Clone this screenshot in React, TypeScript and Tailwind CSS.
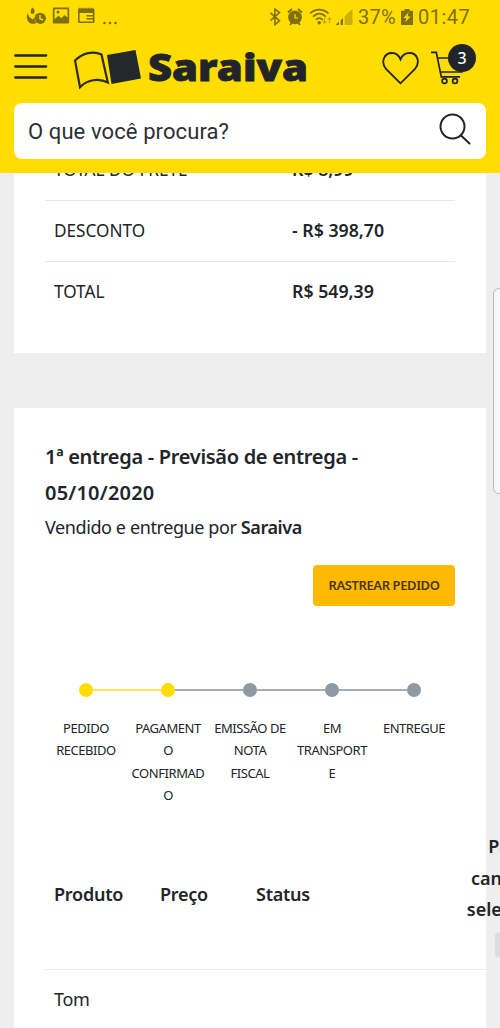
import { clsx } from 'clsx';

const summary = [
  { label: 'TOTAL DO FRETE', value: 'R$ 8,99' },
  { label: 'DESCONTO', value: '- R$ 398,70' },
  { label: 'TOTAL', value: 'R$ 549,39' },
];

const steps = [
  { label: 'PEDIDO RECEBIDO', done: true },
  { label: 'PAGAMENTO CONFIRMADO', done: true },
  { label: 'EMISSÃO DE NOTA FISCAL', done: false },
  { label: 'EM TRANSPORTE', done: false },
  { label: 'ENTREGUE', done: false },
];

const StatusBar = () => (
  <div className="flex h-[34px] items-center justify-between pl-[26px] pr-[29px] font-[Roboto,sans-serif] text-[20px] text-[#80700c]">
    <svg width="94" height="20" viewBox="0 0 94 20" fill="currentColor">
      <path d="M6.500 .5c2.500 2 2.800 4 1.200 6.200H5.300C4 4.600 4.600 2.500 6.500 .5z" />
      <path d="M1.500 6.500c-2 5 .5 10.300 5.500 10.300 1.500 0 2.500-.4 3.500-1-2.500-2-2.500-6 .3-8.300l-.8-1-1 3.500-2.500 2.500-3-2.500z" />
      <circle cx="14.300" cy="11.300" r="5.600" />
      <path d="M14 8v3.800l3 1.200" fill="none" stroke="#ffdd00" strokeWidth="1.400" />
      <path fillRule="evenodd" d="M28 .5h14a1.200 1.200 0 0 1 1.200 1.200v13.600a1.200 1.200 0 0 1-1.200 1.200H28a1.200 1.200 0 0 1-1.200-1.200V1.700A1.200 1.200 0 0 1 28 .5zM28.500 2.200v10l4-3.500 3 2.500 3-3.200 3 2.500V2.200z" />
      <circle cx="32" cy="5" r="1.500" />
      <path fillRule="evenodd" d="M53 1.500h14.500a1 1 0 0 1 1 1V15a1 1 0 0 1-1 1H53a1 1 0 0 1-1-1V2.500a1 1 0 0 1 1-1zM53.600 6v8.500h13.200V6z" />
      <path d="M53 .8h1.500v1H53zM56 .8h1.500v1H56zM59 .8h1.500v1H59zM62 .8h1.500v1H62zM65 .8h1.500v1H65zM60.500 8h6.500v1.500h-6.500zM60.500 11h6.500v1.500h-6.500z" />
      <circle cx="78.500" cy="16" r="1.300" />
      <circle cx="84" cy="16" r="1.300" />
      <circle cx="89.500" cy="16" r="1.300" />
    </svg>
    <div className="flex items-center">
      <svg width="86" height="18" viewBox="0 0 86 18" fill="currentColor">
        <path d="M1.500 4.800l9 8-4.600 3.800V1l4.600 3.600-9 8" fill="none" stroke="currentColor" strokeWidth="1.600" />
        <circle cx="26" cy="9.300" r="6.900" />
        <path d="M19 4.500l4-3.500M33 4.500L29 1M21 17l2-2.500M31 17l-2-2.500" stroke="currentColor" strokeWidth="1.900" />
        <path d="M26 6v4h3" fill="none" stroke="#ffdd00" strokeWidth="1.200" />
        <g fill="none" stroke="currentColor" strokeWidth="1.700">
          <path d="M41 5.500c5.500-5.300 13-5.300 18.500 0" />
          <path d="M44 8.700c4-3.800 8.800-3.800 12.800 0" />
          <path d="M47 11.800c2-2 4.500-2 6.700 0" />
        </g>
        <circle cx="50.200" cy="14.700" r="1.700" />
        <path d="M55.500 10v5m-1.800-1.800l1.800 2 1.800-2M60.500 15v-5m-1.800 1.800l1.800-2 1.800 2" fill="none" stroke="currentColor" strokeOpacity=".45" strokeWidth="1.100" />
        <path d="M70 13.500V17h-3.500zM74 10v7h-2.300v-4.800z" />
        <path d="M75.700 8.500l2.800-3L83.500 1v16h-7.800z" opacity=".4" />
      </svg>
      <span className="ml-[3px] w-[40px] whitespace-nowrap tracking-[0.3px]">37%</span>
      <svg className="ml-[3px]" width="12" height="18" viewBox="0 0 12 18">
        <path d="M3.500 1h5v1.700H12V17H0V2.700h3.500z" fill="currentColor" />
        <path d="M7.800 4L2.500 10H5.300L4 14.500 9.500 8.500H6.500z" fill="#ffdd00" />
      </svg>
      <span className="ml-[5px] w-[53px] whitespace-nowrap tracking-[0.5px]">01:47</span>
    </div>
  </div>
);

const Header = () => (
  <header className="h-[173px] shrink-0 bg-[#ffdd00]">
    <StatusBar />
    <div className="flex h-[69px] items-start pl-[14px] pr-[23px]">
      <svg className="mt-[18px]" width="34" height="30" viewBox="0 0 34 30" stroke="#212529" strokeWidth="2.300" strokeLinecap="round">
        <path d="M1.200 3.500h31M1.200 14.500h31M1.200 25.500h31" />
      </svg>
      <svg className="ml-[24px] mt-[12px] overflow-visible" width="238" height="46" viewBox="0 0 238 46">
        <path d="M3 14.500C11 7 21 4.500 29.500 8.500L35.800 36.500C26.500 31.500 15 34 8 41.200z" fill="none" stroke="#2d2c1b" strokeWidth="2.200" />
        <path d="M35 9L63.500 4 69 32.500 39.500 38z" fill="#23282d" />
        <text
          x="76"
          y="35"
          fontSize="37"
          fontWeight="900"
          fill="#212529"
          stroke="#212529"
          strokeWidth="0.800"
          fontFamily="Noto Sans, sans-serif"
          textLength="160"
          lengthAdjust="spacingAndGlyphs"
        >
          Saraiva
        </text>
      </svg>
      <svg className="ml-[72px] mt-[17px]" width="38" height="34" viewBox="0 0 38 34" fill="none" stroke="#212529" strokeWidth="1.800">
        <path d="M18.500 32.300L4 18C-1.500 11 2 2 10 2c4 0 7 2.700 8.500 6.300C20 4.700 23.500 2 27.500 2c8 0 11 9 5.500 16z" />
      </svg>
      <div className="relative ml-[11px] mt-[10px] h-[42px] w-[46px]">
        <svg className="mt-[6px]" width="34" height="36" viewBox="0 0 34 36" fill="none" stroke="#212529" strokeWidth="1.700">
          <path d="M0 2.300h5.300l5 24.500H29M6.500 8H31v14H9.500" />
          <circle cx="13.500" cy="31" r="2.400" />
          <circle cx="24" cy="31" r="2.400" />
        </svg>
        <span className="absolute left-[17px] top-0 flex h-[28px] w-[28px] items-center justify-center rounded-full bg-[#212529] font-['Noto_Sans',sans-serif] text-[16px] font-medium leading-none text-white">
          3
        </span>
      </div>
    </div>
    <div className="mx-[14px] flex h-[56px] items-center justify-between rounded-lg bg-white pl-[14px] pr-[15px]">
      <span className="font-[Roboto,sans-serif] text-[22px] tracking-[0.1px] text-[#2c3034]">O que você procura?</span>
      <svg className="-mt-[5px]" width="32" height="32" viewBox="0 0 32 32" fill="none" stroke="#212529" strokeWidth="2" strokeLinecap="round">
        <circle cx="13.500" cy="13.500" r="12" />
        <path d="M22 22.500l8.500 8" />
      </svg>
    </div>
  </header>
);

const Summary = () => (
  <section className="mx-[14px] -mt-[34px] h-[214px] shrink-0 bg-white px-[31px]">
    {summary.map((row, index) => (
      <div
        key={row.label}
        className={clsx('flex h-[61px] items-center pb-px pl-[9px]', index > 0 && 'border-t border-[#e6e7e8]')}
      >
        <span className="w-[238px]">
          <span className="inline-block origin-left scale-x-[0.955]">{row.label}</span>
        </span>
        <span className="inline-block origin-left scale-x-[0.985] font-semibold">{row.value}</span>
      </div>
    ))}
  </section>
);

const Steps = () => (
  <ol className="mt-[75px] flex h-[161px]">
    {steps.map((step, index) => (
      <li key={step.label} className="w-[82px] text-center text-[13px] leading-[22.500px] tracking-[-0.450px]">
        <div className="flex h-[16px] items-center">
          <div className={clsx('h-[2px] flex-1', index > 0 && (step.done ? 'bg-[#ffe45c]' : 'bg-[#a3adb5]'))}></div>
          <div className={clsx('h-[14px] w-[14px] rounded-full', step.done ? 'bg-[#ffdd00]' : 'bg-[#8d99a3]')}></div>
          <div
            className={clsx(
              'h-[2px] flex-1',
              index < steps.length - 1 && (steps[index + 1].done ? 'bg-[#ffe45c]' : 'bg-[#a3adb5]')
            )}
          ></div>
        </div>
        <p className="mx-[4px] mt-[18.500px] break-words">{step.label}</p>
      </li>
    ))}
  </ol>
);

const Products = () => (
  <div className="w-[520px]">
    <div className="flex h-[126px] font-semibold tracking-[-0.250px]">
      <span className="w-[106px] pl-[9px] pt-[38px]">Produto</span>
      <span className="w-[96px] pl-[9px] pt-[38px]">Preço</span>
      <span className="w-[210px] pl-[9px] pt-[38px]">Status</span>
      <div className="-mt-[12px] flex w-[102px] flex-col items-center text-center leading-[31.500px] tracking-normal">
        <span>
          Para
          <br />
          cancelar
          <br />
          selecione
        </span>
        <span className="ml-[2px] mt-[7px] h-[24px] w-[28px] rounded-[3px] bg-[#dcdcdc]"></span>
      </div>
    </div>
    <div className="border-t border-[#ebecee] pl-[9px] pt-[16px] tracking-[-0.300px]">Tom</div>
  </div>
);

const Delivery = () => (
  <section className="mx-[14px] mt-[55px] h-[700px] shrink-0 bg-white px-[31px] pt-[31px]">
    <h2 className="text-[20px] font-semibold leading-[36px]">
      <span className="tracking-[-0.300px]">1ª entrega - Previsão de entrega -</span>
      <br />
      <span className="tracking-[0.200px]">05/10/2020</span>
    </h2>
    <p className="leading-[32px] tracking-[-0.400px]">
      Vendido e entregue por <b className="font-semibold">Saraiva</b>
    </p>
    <div className="mt-[22px] flex justify-end">
      <button className="h-[41px] w-[142px] rounded-[4px] bg-[#ffba00] text-[13px] font-semibold tracking-[-0.400px] text-[#4a3510]">
        RASTREAR PEDIDO
      </button>
    </div>
    <div className="pt-px">
      <Steps />
    </div>
    <Products />
  </section>
);

export default function App() {
  return (
    <div className="relative flex h-[1028px] w-[500px] flex-col overflow-hidden bg-[#eeeeee] font-['Noto_Sans',sans-serif] text-[18px] text-[#212529]">
      <Header />
      <main className="flex h-[855px] shrink-0 flex-col overflow-hidden">
        <Summary />
        <Delivery />
      </main>
      {/* Edge panel handle */}
      <div className="absolute left-[493px] top-[288px] h-[206px] w-[14px] rounded-[6px] border border-[#b9b9b9] bg-[#f7f7f7]"></div>
    </div>
  );
}
